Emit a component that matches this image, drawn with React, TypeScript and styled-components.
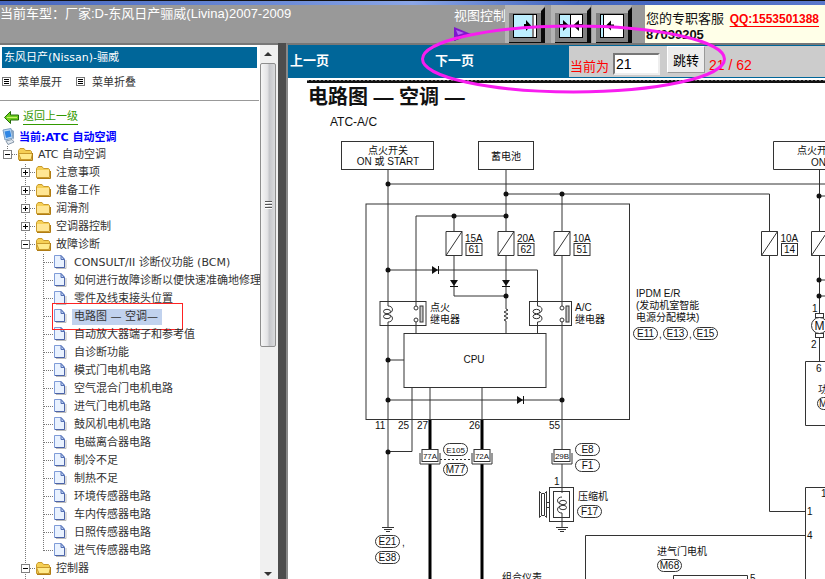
import React from "react";
import styled, { createGlobalStyle, css } from "styled-components";

const GlobalStyle = createGlobalStyle`
  * { box-sizing: border-box; }
  html, body, #root { margin: 0; height: 100%; }
  body { overflow: hidden; background: #fff; }
  button, input { font: inherit; }
`;

const arial = `"Liberation Sans", "Noto Sans CJK SC", sans-serif`;
const verdana = `"DejaVu Sans", "Noto Sans CJK SC", sans-serif`;

const Page = styled.div`
  position: relative;
  display: grid;
  grid-template-rows: auto auto 1fr;
  height: 100vh;
  overflow: hidden;
  font-family: ${arial};
  font-size: 13px;
`;

const WindowEdge = styled.div`
  height: 5px;
  border-top: 1px solid #111;
  background: linear-gradient(90deg, #4565bd, #6e8dd8 35%, #8ba6e6 50%, #3f63bd 70%, #5b78cc);
`;

const Header = styled.header`
  display: grid;
  grid-template-columns: 1fr 191px 180px;
  height: 38px;
  background: #999;
  color: #fff;
  overflow: hidden;
`;

const CarModel = styled.div`
  line-height: 18px;
  white-space: nowrap;
`;

const ViewControls = styled.div`
  display: grid;
  grid-template-columns: 51px 46px 41px 41px;
`;

const ViewLabel = styled.div`
  display: flex;
  flex-direction: column;
  line-height: 22px;
  white-space: nowrap;
`;

const ViewButton = styled.button`
  display: block;
  width: 41px;
  height: 38px;
  padding: 0;
  border: 0;
  background: none;
`;

const Contact = styled.div`
  padding: 6px 0 0 1px;
  background: #ffffe8;
  color: #111;
  line-height: 16px;
  white-space: nowrap;
`;

const ContactLink = styled.a`
  margin-left: 2px;
  color: #f00;
  font-size: 12px;
  font-weight: bold;
  text-underline-offset: 3px;
`;

const Frames = styled.div`
  display: grid;
  grid-template-columns: 278px 8px minmax(0, 1fr);
  min-height: 0;
`;

const Splitter = styled.div`
  background: #4d4d4d;
`;

const SideFrame = styled.div`
  display: grid;
  grid-template-columns: minmax(0, 1fr) 18px;
  min-height: 0;
  overflow: hidden;
  border-top: 2px solid #777;
  background: #fff;
  font-family: ${verdana};
  font-size: 11px;
  color: #333;
`;

const SideContent = styled.nav`
  overflow: hidden;
  white-space: nowrap;
`;

const SideTitle = styled.div`
  margin: 2px 3px 0 2px;
  padding-left: 2px;
  line-height: 21px;
  background: #069;
  color: #fff;
`;

const MenuTools = styled.div`
  display: flex;
  gap: 14px;
  height: 33px;
  margin: 0 1px 0 0;
  padding: 3px 0 0 2px;
  border-bottom: 1px solid #999;
`;

const MenuButton = styled.button`
  display: flex;
  align-items: center;
  gap: 7px;
  height: 20px;
  padding: 0;
  border: 0;
  background: none;
  color: #333;
`;

const BackRow = styled.div`
  display: flex;
  align-items: center;
  gap: 4px;
  height: 18px;
  margin-top: 7px;
  padding-left: 4px;
`;

const BackLink = styled.a`
  line-height: 15px;
  color: #390;
  text-decoration: none;
  border-bottom: 1px solid #390;
`;

const CurrentRow = styled.div`
  display: flex;
  align-items: center;
  gap: 4px;
  height: 20px;
  padding-left: 2px;
  font-weight: bold;
  color: #00f;
`;

const TreeList = styled.ul`
  margin: 0;
  padding: 0;
  list-style: none;
`;

const TreeRow = styled.li`
  display: flex;
  height: 18px;
  line-height: 18px;
`;

const Cell = styled.svg`
  flex: none;
  display: block;
  width: 18px;
  height: 18px;
`;

const TreeLink = styled.a<{ $active?: boolean }>`
  position: relative;
  align-self: center;
  padding: 0 2px;
  line-height: 16px;
  color: #333;
  text-decoration: none;
  ${(p) => p.$active && css`
    padding-right: 4px;
    background: #c1d2ee;
  `}
`;

const RedMark = styled.span`
  position: absolute;
  top: -6px;
  left: -20px;
  width: 131px;
  height: 27px;
  border: 1px solid #f22;
  pointer-events: none;
`;

const Scrollbar = styled.div`
  display: grid;
  grid-template-rows: 18px 284px 1fr 18px;
  padding-right: 2px;
  background: #f0f0f0;
`;

const ScrollArrow = styled.svg`
  display: block;
  width: 16px;
  height: 18px;
`;

const ScrollThumb = styled.div`
  display: flex;
  flex-direction: column;
  align-items: center;
  justify-content: center;
  gap: 1px;
  border: 1px solid #8e8e8e;
  border-radius: 2px;
  background: linear-gradient(90deg, #f6f6f6, #e4e4e6 45%, #c6c7cb 60%, #dadbdd);
`;

const Grip = styled.span`
  width: 7px;
  height: 2px;
  border-top: 1px solid #555;
  background: #fff;
`;

const MainFrame = styled.main`
  display: flex;
  flex-direction: column;
  min-height: 0;
  overflow: hidden;
  border-top: 2px solid #777;
  border-left: 2px solid #888;
  background: #fff;
`;

const Pager = styled.div`
  display: grid;
  grid-template-columns: 145fr 136fr 256fr;
  flex: none;
  height: 33px;
  border-bottom: 1px solid #069;
  background: #069;
`;

const PageLink = styled.a`
  padding: 0 2px;
  line-height: 32px;
  font-weight: bold;
  color: #fff;
  text-decoration: none;
`;

const JumpForm = styled.form`
  display: flex;
  align-items: center;
  gap: 4px;
  margin-top: 1px;
  padding-left: 1px;
  overflow: hidden;
  background: #ccc;
  color: #f00;
  white-space: nowrap;
`;

const JumpLabel = styled.label`
  padding-top: 7px;
`;

const PageInput = styled.input`
  width: 47px;
  height: 22px;
  margin: 4px 3px 0 0;
  padding: 0 1px;
  border: 2px solid;
  border-color: #777 #eee #eee #777;
  background: #fff;
  color: #000;
  font-size: 14px;
`;

const JumpButton = styled.button`
  align-self: flex-start;
  width: 38px;
  height: 27px;
  padding: 0;
  border: 1px solid;
  border-color: #fff #999 #999 #fff;
  background: #ededed;
  color: #000;
`;

const PageCount = styled.span`
  padding-top: 7px;
  font-size: 14px;
`;

const Drawing = styled.svg`
  flex: none;
  display: block;
  width: 537px;
  height: 501px;
  font-family: ${arial};
  font-size: 10px;
  fill: #111;
`;

const DrawingTitle = styled.text`
  font-size: 20px;
  font-weight: bold;
`;

const SectionName = styled.text`
  font-size: 12px;
`;

const TinyText = styled.text`
  font-size: 8px;
`;

const CircleMark = styled.svg`
  position: absolute;
  top: 20px;
  left: 418px;
  width: 312px;
  height: 78px;
  pointer-events: none;
`;

/* Tree parts */

const dots = { stroke: "#777", strokeWidth: 1, strokeDasharray: "1 1" };

type Branch = "blank" | "line" | "tee" | "end" | "plus" | "minus" | "root";

function Guide({ kind }: { kind: Branch }) {
  const box = kind === "plus" || kind === "minus" || kind === "root";
  return (
    <Cell viewBox="0 0 18 18" aria-hidden="true">
      {kind !== "blank" && (
        <path d={kind === "end" || kind === "root" ? "M7.5 0V9" : "M7.5 0V18"} {...dots} />
      )}
      {kind !== "blank" && kind !== "line" && <path d="M8 8.5H18" {...dots} />}
      {box && (
        <g shapeRendering="crispEdges">
          <rect x="3.5" y="4.5" width="8" height="8" fill="#fff" stroke="#808080" />
          <path d="M5 8.5H10" stroke="#000" />
          {kind === "plus" && <path d="M7.5 6V11" stroke="#000" />}
        </g>
      )}
    </Cell>
  );
}

function FolderIcon({ open }: { open?: boolean }) {
  return (
    <Cell viewBox="0 0 18 18" aria-hidden="true">
      <path d="M0.500 4.500L2 2.500H6L7.500 4.500H12.500L13.500 5.500V13.500H0.500Z" fill="#f5cf55" stroke="#c99a2c" />
      {open ? (
        <path d="M0.500 7.500H14.500L13 13.500H3Z" fill="#ffea8c" stroke="#c99a2c" />
      ) : (
        <path d="M1 6H13V13H1Z" fill="#ffe694" />
      )}
      <path d="M1 14.500H14.500V7" fill="none" stroke="#b07c14" />
    </Cell>
  );
}

function FileIcon() {
  return (
    <Cell viewBox="0 0 18 18" aria-hidden="true">
      <path d="M2 14.500H12V6" fill="none" stroke="#bbb" />
      <path d="M0.500 1.500H7L10.500 5V13.500H0.500Z" fill="#e9f2ff" stroke="#7f9cd8" />
      <path d="M7 1.500V5.500H10.500Z" fill="#b8cdf2" stroke="#5570b4" />
      <path d="M10.500 6V13.500H1" fill="none" stroke="#4c64a8" />
    </Cell>
  );
}

const chapters: { name: string; kind: Branch }[] = [
  { name: "注意事项", kind: "plus" },
  { name: "准备工作", kind: "plus" },
  { name: "润滑剂", kind: "plus" },
  { name: "空调器控制", kind: "plus" },
  { name: "故障诊断", kind: "minus" },
];

const topics = [
  "CONSULT/II 诊断仪功能 (BCM)",
  "如何进行故障诊断以便快速准确地修理",
  "零件及线束接头位置",
  "电路图 — 空调—",
  "自动放大器端子和参考值",
  "自诊断功能",
  "模式门电机电路",
  "空气混合门电机电路",
  "进气门电机电路",
  "鼓风机电机电路",
  "电磁离合器电路",
  "制冷不足",
  "制热不足",
  "环境传感器电路",
  "车内传感器电路",
  "日照传感器电路",
  "进气传感器电路",
];
const activeTopic = 3;

function ChapterRow({ name, kind }: { name: string; kind: Branch }) {
  return (
    <TreeRow>
      <Guide kind="blank" />
      <Guide kind={kind} />
      <FolderIcon open={kind === "minus"} />
      <TreeLink href="#">{name}</TreeLink>
    </TreeRow>
  );
}

function ListIcon() {
  return (
    <svg width="9" height="9" viewBox="0 0 9 9" shapeRendering="crispEdges" aria-hidden="true">
      <rect x="0.5" y="0.5" width="8" height="8" fill="#fff" stroke="#777" />
      <path d="M2 2.500H7M2 4.500H7M2 6.500H7" stroke="#000" />
    </svg>
  );
}

function Sidebar() {
  return (
    <SideFrame>
      <SideContent>
        <SideTitle>东风日产(Nissan)-骊威</SideTitle>
        <MenuTools>
          <MenuButton type="button"><ListIcon />菜单展开</MenuButton>
          <MenuButton type="button"><ListIcon />菜单折叠</MenuButton>
        </MenuTools>
        <BackRow>
          <svg width="15" height="13" viewBox="0 0 15 13" aria-hidden="true">
            <path d="M0.500 6.500L6.500 0.500V4H14.500V9H6.500V12.500Z" fill="#6fcf1f" stroke="#226a08" />
            <path d="M3 6.500H13" stroke="#c9f06a" />
          </svg>
          <BackLink href="#">返回上一级</BackLink>
        </BackRow>
        <CurrentRow>
          <svg width="13" height="17" viewBox="0 0 13 17" aria-hidden="true">
            <path d="M1 2L9 0.500L11 10L3 12Z" fill="#b9d9f7" stroke="#7c9fc4" />
            <path d="M2.500 3.500L8 2.500L9.500 8.500L4 10Z" fill="#2f86e4" />
            <path d="M9 1L12 3V12L11 10Z" fill="#8ba6c2" />
            <path d="M4 13L10 11.500L12 14L6 16.500Z" fill="#dfe7ef" stroke="#8797a8" />
          </svg>
          <span>当前:ATC 自动空调</span>
        </CurrentRow>
        <TreeList>
          <TreeRow>
            <Guide kind="root" />
            <FolderIcon open />
            <TreeLink href="#">ATC 自动空调</TreeLink>
          </TreeRow>
          {chapters.map((c) => <ChapterRow key={c.name} {...c} />)}
          {topics.map((name, i) => (
            <TreeRow key={name}>
              <Guide kind="blank" />
              <Guide kind="line" />
              <Guide kind={i === topics.length - 1 ? "end" : "tee"} />
              <FileIcon />
              <TreeLink href="#" $active={i === activeTopic}>
                {name}
                {i === activeTopic && <RedMark />}
              </TreeLink>
            </TreeRow>
          ))}
          <ChapterRow name="控制器" kind="minus" />
          <TreeRow>
            <Guide kind="blank" />
            <Guide kind="line" />
            <Guide kind="tee" />
            <FileIcon />
          </TreeRow>
        </TreeList>
      </SideContent>
      <Scrollbar>
        <ScrollArrow viewBox="0 0 16 18"><path d="M4 11L8 7L12 11Z" fill="#333" /></ScrollArrow>
        <ScrollThumb><Grip /><Grip /><Grip /></ScrollThumb>
        <span />
        <ScrollArrow viewBox="0 0 16 18"><path d="M4 11H12L8 15Z" fill="#333" /></ScrollArrow>
      </Scrollbar>
    </SideFrame>
  );
}

/* Toolbar pictures */

function Bevel({ children }: { children: React.ReactNode }) {
  return (
    <svg width="41" height="38" viewBox="0 0 41 38" aria-hidden="true">
      <path d="M0 0H40L36 8H4V38H0Z" fill="#b4b4b4" />
      <rect x="4" y="8" width="32" height="29" fill="#808080" />
      <path d="M40 2V38H4V37H36V6Z" fill="#0a0a0a" />
      <rect x="8.5" y="9.500" width="23" height="23" fill="#fff" stroke="#000" />
      {children}
    </svg>
  );
}

const sky = "#bdefff";

function Toolbar() {
  return (
    <ViewControls>
      <ViewLabel>
        视图控制
        <svg width="18" height="15" viewBox="0 0 18 15" aria-hidden="true">
          <path d="M0 0L17 7L0 14Z" fill="#7d17cc" />
          <path d="M2 3L10 6L4 8Z" fill="#b66cf2" />
          <path d="M0 14L17 7L4 9Z" fill="#4a0a88" />
        </svg>
      </ViewLabel>
      <ViewButton type="button" aria-label="展开右栏">
        <Bevel>
          <rect x="9" y="10" width="18" height="22" fill={sky} />
          <path d="M28 10V32" stroke="#000" />
          <path d="M19 20.500H22" stroke="#000" strokeWidth="3" />
          <path d="M21 15L26 20.500L21 26Z" fill="#000" />
        </Bevel>
      </ViewButton>
      <ViewButton type="button" aria-label="双栏">
        <Bevel>
          <rect x="9" y="10" width="10" height="22" fill={sky} />
          <path d="M19.500 10V32" stroke="#000" />
          <path d="M9 20.500H12M28 20.500H31" stroke="#000" strokeWidth="3" />
          <path d="M12 15L18 20.500L12 26ZM28 15L22 20.500L28 26Z" fill="#000" />
        </Bevel>
      </ViewButton>
      <ViewButton type="button" aria-label="收起左栏">
        <Bevel>
          <rect x="9" y="10" width="2" height="22" fill={sky} />
          <path d="M11.500 10V32" stroke="#000" />
          <path d="M18 20.500H22" stroke="#000" strokeWidth="2" />
          <path d="M19 15.500L14 20.500L19 25.500Z" fill="#000" />
        </Bevel>
      </ViewButton>
    </ViewControls>
  );
}

/* Circuit symbols */

function Fuse({ x, amp, no }: { x: number; amp?: string; no?: string }) {
  return (
    <g>
      <path d={`M${x - 8} 231.500h16v24h-16zM${x - 8} 255.500l16 -24`} fill="#fff" />
      {amp && (
        <>
          <rect x={x + 12} y={243.5} width={16} height={12} fill="none" />
          <text x={x + 11} y={242} stroke="none">{amp}</text>
          <text x={x + 20} y={253} textAnchor="middle" stroke="none">{no}</text>
        </>
      )}
    </g>
  );
}

function Pill({ x, y, label, tiny }: { x: number; y: number; label: string; tiny?: boolean }) {
  const T = tiny ? TinyText : "text";
  return (
    <g>
      <rect x={x} y={y} width={24} height={12} rx={6} fill="#fff" />
      <T x={x + 12} y={y + 9.5} textAnchor="middle" stroke="none">{label}</T>
    </g>
  );
}

function Joint({ x, label }: { x: number; label: string }) {
  return (
    <g>
      <path d={`M${x - 10} 453v11h20v-11`} fill="#fff" />
      <rect x={x - 8} y={449.5} width={16} height={12} fill="#fff" />
      <TinyText x={x} y={459} textAnchor="middle" stroke="none">{label}</TinyText>
    </g>
  );
}

function Coil({ x, y, flip }: { x: number; y: number; flip?: boolean }) {
  const s = flip ? -1 : 1;
  return (
    <g fill="none">
      <ellipse cx={x - s} cy={y + 5.5} rx={3.5} ry={2.2} />
      <ellipse cx={x - s} cy={y + 10.5} rx={3.5} ry={2.2} />
      <path d={`M${x} ${y}c${5 * s} 0 ${6 * s} 5 ${2 * s} 7M${x} ${y + 16}c${5 * s} 0 ${6 * s} -5 ${2 * s} -7`} />
    </g>
  );
}

function Relay({ left, width, coil, contact }: { left: number; width: number; coil: number; contact: number }) {
  return (
    <g>
      <rect x={left} y={301.5} width={width} height={24} fill="none" />
      <path d={`M${coil} 306v16M${contact} 310v8`} stroke="#fff" strokeWidth="3" />
      <Coil x={coil} y={306} />
      <circle cx={contact} cy={308} r={2} fill="#fff" />
      <circle cx={contact} cy={320} r={2} fill="#fff" />
      <rect x={contact + 4} y={306} width={3} height={16} fill="#ccc" />
    </g>
  );
}

const joints: [number, number][] = [
  [388, 184], [506, 194], [562, 194], [454, 216], [506, 216], [388, 270], [506, 296],
  [388, 360], [388, 400], [562, 400], [388, 452], [819, 196], [819, 280], [819, 296],
];

function CircuitDrawing() {
  return (
    <Drawing viewBox="288 78 537 501" role="img" aria-label="电路图 — 空调 —">
      <path d="M307 81.500H825" stroke="#111" strokeWidth="3" />
      <path d="M307 80.500H825" stroke="#777" strokeDasharray="2 2" />
      <DrawingTitle x="308" y="104">电路图 — 空调 —</DrawingTitle>
      <SectionName x="330" y="126">ATC-A/C</SectionName>

      <g stroke="#333" strokeWidth="1">
        <g fill="none">
          <rect x="341.500" y="141.500" width="92" height="28" />
          <rect x="478.500" y="141.500" width="55" height="28" />
          <path d="M825 141.500H773.500V169.500H825" />
          <rect x="366" y="204" width="263.500" height="215.500" />
          <path d="M388 170V527M388 184H825M506 170V231M506 194H769.500V511.500H805" />
          <path d="M416 334V216H506M454 216V296H506M506 255V309M562 194V306M562 318V493" />
          <path d="M388 270H537.500V334M388 360H404" />
          <rect x="404" y="333.500" width="142" height="54" />
          <path d="M388 400H562M412 388V451.500H388M430 388V420M482 388V420" />
          <path d="M506 309l2 1l-4 2l4 2l-4 2l4 2l-4 2l2 1V334" />
          <path d="M819.500 170V361M819.500 196H825M819.500 280H825M819.500 296H825" />
          <path d="M825 361.500H805.500V425.500H825M825 487.500H805.500V579M805.500 535.500H585.500V579" />
          <path d="M673.500 579V575.500H747.500V579" />
          <path d="M440 459.500H472" strokeDasharray="2 2" />
        </g>
        <path d="M430 420V579M482 420V579" stroke="#000" strokeWidth="3" />

        <Fuse x={454} amp="15A" no="61" />
        <Fuse x={506} amp="20A" no="62" />
        <Fuse x={562} amp="10A" no="51" />
        <Fuse x={769.5} amp="10A" no="14" />
        <Fuse x={819.5} />

        <g fill="#111" stroke="none">
          <path d="M432 266L438 270L432 274ZM438 266h1v8h-1zM517 396L523 400L517 404ZM523 396h1v8h-1z" />
          <path d="M450 280H458L454 286ZM450 286h8v1h-8zM502 280H510L506 286ZM502 286h8v1h-8z" />
          {joints.map(([x, y]) => <circle key={`${x}-${y}`} cx={x} cy={y} r={2.5} />)}
        </g>

        <Relay left={380} width={46} coil={388} contact={416} />
        <Relay left={529.5} width={42} coil={537.5} contact={562} />

        <Joint x={430} label="77A" />
        <Joint x={482} label="72A" />
        <Joint x={562} label="29B" />
        <Pill x={443.5} y={443.5} label="E105" tiny />
        <Pill x={443.5} y={463.5} label="M77" />
        <Pill x={575.5} y={443.5} label="E8" />
        <Pill x={575.5} y={459.5} label="F1" />
        <Pill x={577.5} y={505.5} label="F17" />
        <Pill x={375.5} y={535.5} label="E21" />
        <Pill x={375.5} y={551.5} label="E38" />
        <Pill x={633.5} y={327.5} label="E11" />
        <Pill x={663.5} y={327.5} label="E13" />
        <Pill x={693.5} y={327.5} label="E15" />
        <Pill x={657.5} y={559.5} label="M68" />
        <Pill x={817.5} y={397.5} label="" />

        <g fill="none">
          <path d="M382 527.500H394M384 529.500H392M386 531.500H390" />
          <path d="M562 513V527M556 527.500H568M558 529.500H566M560 531.500H564" />
          <rect x="549.500" y="487.500" width="24" height="34" />
          <rect x="553.500" y="491.500" width="16" height="26" />
          <path d="M539.500 491.500l2 2h3l2 -2v26l-2 -2h-3l-2 2zM541.500 494V515M544.500 494V515M546 502.500H549M546 507.500H549" />
        </g>
        <Coil x={562} y={497} flip />
        <rect x="815.500" y="313.500" width="8" height="4" fill="#fff" />
        <rect x="815.500" y="333.500" width="8" height="4" fill="#fff" />
        <circle cx="819.500" cy="325.500" r="8" fill="#fff" />
      </g>

      <text x="388" y="154" textAnchor="middle">点火开关</text>
      <text x="388" y="165" textAnchor="middle">ON 或 START</text>
      <text x="506" y="160" textAnchor="middle">蓄电池</text>
      <text x="797" y="154">点火开</text>
      <text x="811" y="166">ON</text>
      <text x="430" y="311">点火</text>
      <text x="430" y="323">继电器</text>
      <text x="575" y="311">A/C</text>
      <text x="575" y="323">继电器</text>
      <text x="474" y="363" textAnchor="middle">CPU</text>
      <text x="636" y="297">IPDM E/R</text>
      <text x="636" y="309">(发动机室智能</text>
      <text x="636" y="321">电源分配模块)</text>
      <text x="659" y="338">,</text>
      <text x="689" y="338">,</text>
      <text x="402" y="546">,</text>
      <text x="375" y="429">11</text>
      <text x="398" y="429">25</text>
      <text x="417" y="429">27</text>
      <text x="469" y="429">26</text>
      <text x="549" y="429">55</text>
      <text x="554" y="485">1</text>
      <text x="578" y="500">压缩机</text>
      <text x="502" y="581">组合仪表</text>
      <text x="657" y="555">进气门电机</text>
      <text x="750" y="582">5</text>
      <text x="807" y="515">1</text>
      <text x="807" y="539">4</text>
      <text x="821" y="497">1</text>
      <text x="812" y="312">1</text>
      <text x="811" y="348">2</text>
      <text x="816" y="372">6</text>
      <text x="818" y="393">功</text>
      <text x="819" y="407">M</text>
      <SectionName x="819.500" y="330" textAnchor="middle">M</SectionName>
    </Drawing>
  );
}

export default function App() {
  return (
    <Page>
      <GlobalStyle />
      <WindowEdge />
      <Header>
        <CarModel>当前车型：厂家:D-东风日产骊威(Livina)2007-2009</CarModel>
        <Toolbar />
        <Contact>
          您的专职客服 <ContactLink href="#">QQ:1553501388</ContactLink>
          <br />
          <b>87039205</b>
        </Contact>
      </Header>
      <Frames>
        <Sidebar />
        <Splitter />
        <MainFrame>
          <Pager>
            <PageLink href="#">上一页</PageLink>
            <PageLink href="#">下一页</PageLink>
            <JumpForm onSubmit={(e) => e.preventDefault()}>
              <JumpLabel htmlFor="page">当前为</JumpLabel>
              <PageInput id="page" type="text" defaultValue="21" />
              <JumpButton type="submit">跳转</JumpButton>
              <PageCount>21 / 62</PageCount>
            </JumpForm>
          </Pager>
          <CircuitDrawing />
        </MainFrame>
      </Frames>
      <CircleMark viewBox="0 0 312 78" aria-hidden="true">
        <ellipse cx="155.500" cy="39" rx="151" ry="33" fill="none" stroke="#f81df0" strokeWidth="3" />
      </CircleMark>
    </Page>
  );
}
